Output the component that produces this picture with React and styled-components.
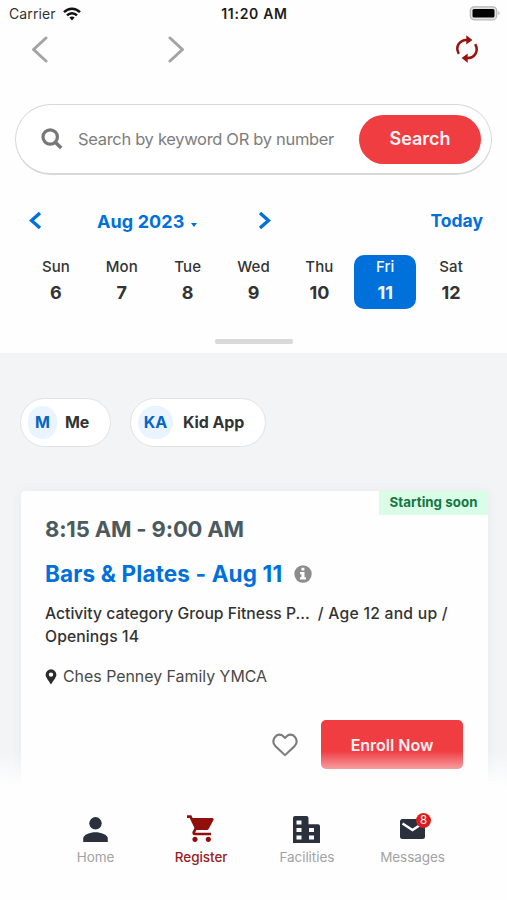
import React from 'react';
import styled, { createGlobalStyle, css } from 'styled-components';

const Global = createGlobalStyle`
  *, *::before, *::after { box-sizing: border-box; }
  body { margin: 0; background: #fff; font-family: Inter, Roboto, sans-serif; color: #333; }
  button { font-family: inherit; border: 0; padding: 0; margin: 0; background: none; }
  svg { display: block; flex: none; }
`;

const Screen = styled.div`
  width: 507px;
  height: 900px;
  overflow: hidden;
  display: flex;
  flex-direction: column;
  background: #fefefe;
`;

const Label = styled.span`
  font-size: ${p => p.$size}px;
  font-weight: ${p => p.$weight || 400};
  letter-spacing: ${p => p.$track || 0}px;
  color: ${p => p.$color || 'inherit'};
  line-height: ${p => p.$line || 24}px;
  white-space: nowrap;
`;

const StatusBar = styled.header`
  height: 28px;
  display: grid;
  grid-template-columns: 1fr auto 1fr;
  align-items: center;
  padding: 0 7px 0 9px;
`;
const Carrier = styled.div`
  display: flex;
  align-items: center;
  gap: 7px;
`;
const BatterySlot = styled.div`
  display: flex;
  justify-content: flex-end;
  margin: -2px 0 0;
`;

const BrowserBar = styled.nav`
  height: 42px;
  display: flex;
  align-items: center;
  padding: 0 28px 0 31px;
`;
const IconButton = styled.button`
  display: flex;
  margin-left: ${p => p.$left || '0'};
`;

const SearchBox = styled.div`
  height: 71px;
  margin: 34px 15px 0;
  border: 1.5px solid #d8d8d8;
  border-bottom-width: 2px;
  border-radius: 36px;
  display: flex;
  align-items: center;
  padding: 0 10px 0 25px;
  background: #fff;
`;
const Placeholder = styled(Label)`
  flex: 1;
  margin-left: 15px;
`;
const SearchButton = styled.button`
  width: 122px;
  height: 49px;
  border-radius: 25px;
  background: #ef3d42;
  color: #fff5f5;
  display: flex;
  align-items: center;
  justify-content: center;
`;

const MonthRow = styled.div`
  height: 30px;
  margin-top: 30px;
  padding: 0 24px 0 29px;
  display: flex;
  align-items: center;
  color: #0070db;
`;
const Month = styled.div`
  display: flex;
  align-items: center;
  gap: 6px;
  margin: 3px 61px 0 55px;
`;
const Caret = styled.i`
  border: 3.500px solid transparent;
  border-top: 4px solid currentColor;
  border-bottom: 0;
  margin-top: 6px;
`;
const Today = styled(Label)`
  margin: 2px 0 0 auto;
`;

const Week = styled.div`
  display: grid;
  grid-template-columns: repeat(7, 65.85px);
  justify-content: center;
  margin: 20px 0 0 0;
`;
const Day = styled.div`
  width: 62px;
  height: 54px;
  justify-self: center;
  border-radius: 10px;
  display: flex;
  flex-direction: column;
  align-items: center;
  color: #333;
  ${p => p.$selected && css`
    background: #0070db;
    color: #eef6ff;
  `}
`;

const Handle = styled.div`
  width: 78px;
  height: 5px;
  border-radius: 2px;
  background: #d9d9d9;
  margin: 30px auto 9px;
`;

const Feed = styled.main`
  position: relative;
  flex: none;
  height: 437px;
  background: #f2f4f6;
  padding: 45px 19px 0 20px;
  overflow: hidden;
`;
const Chips = styled.div`
  display: flex;
  gap: 19px;
`;
const Chip = styled.div`
  height: 49px;
  width: ${p => p.$width}px;
  border: 1.5px solid #e1e2e4;
  border-radius: 25px;
  background: #fff;
  display: flex;
  align-items: center;
  padding: 0 0 1px 7px;
`;
const Avatar = styled.div`
  width: ${p => p.$width}px;
  height: 33px;
  border-radius: 17px;
  background: #e9f4ff;
  display: flex;
  align-items: center;
  justify-content: center;
  margin-right: ${p => p.$gap}px;
`;

const Card = styled.article`
  position: relative;
  height: 340px;
  margin: 44px 0 0 1px;
  padding: 24px 25px 0 24px;
  background: #fefefe;
  border-radius: 4px 4px 0 0;
  box-shadow: 0 0 12px rgba(60, 70, 80, 0.05);
  display: flex;
  flex-direction: column;
`;
const Badge = styled.div`
  position: absolute;
  top: 0;
  right: 0;
  width: 109px;
  height: 24px;
  background: #d9fde6;
  display: flex;
  align-items: center;
  justify-content: center;
  padding-bottom: 2px;
`;
const TitleRow = styled.div`
  height: 30px;
  margin-top: 16px;
  display: flex;
  align-items: center;
  gap: 12px;
`;
const Details = styled.div`
  margin-top: 13px;
  display: flex;
  flex-wrap: wrap;
  column-gap: 8px;
`;
const Place = styled.div`
  margin-top: 17px;
  display: flex;
  align-items: center;
  gap: 6px;
`;
const Actions = styled.div`
  margin-top: 31px;
  display: flex;
  align-items: center;
  justify-content: flex-end;
  gap: 23px;
`;
const EnrollButton = styled.button`
  width: 142px;
  height: 49px;
  border-radius: 5px;
  background: #ef3d42;
  color: #fff1f1;
  display: flex;
  align-items: center;
  justify-content: center;
`;
const Fade = styled.div`
  position: absolute;
  left: 0;
  right: 0;
  bottom: 0;
  height: 39px;
  background: linear-gradient(rgba(254, 254, 254, 0), #fefefe 92%);
`;

const TabBar = styled.footer`
  flex: 1;
  display: grid;
  grid-template-columns: repeat(4, 105.7px);
  justify-content: center;
  padding: 23px 0 0 1px;
`;
const Tab = styled.div`
  display: flex;
  flex-direction: column;
  align-items: center;
  color: #2a313d;
`;
const TabIcon = styled.div`
  position: relative;
  height: 32px;
  display: flex;
  align-items: center;
`;
const Count = styled.div`
  position: absolute;
  top: 0;
  right: -6px;
  width: 15px;
  height: 15px;
  border-radius: 50%;
  background: #dc1f1c;
  display: flex;
  align-items: center;
  justify-content: center;
`;

const Wifi = () => (
  <svg width="18" height="14" viewBox="0 0 18 14" fill="none" stroke="#111" strokeWidth="2.5">
    <path d="M1 5.2C5.6.6 12.4.6 17 5.2" />
    <path d="M4 8.4c2.9-2.9 7.1-2.9 10 0" />
    <path d="M6.4 10.6c1.500-1.400 3.700-1.400 5.200 0L9 13.500z" fill="#111" stroke="none" />
  </svg>
);
const Battery = () => (
  <svg width="31" height="15" viewBox="0 0 31 15">
    <rect x="1.300" y="0.800" width="26.400" height="13" rx="3.800" fill="#e2e2e2" stroke="#b5b5b5" strokeWidth="1.200" />
    <rect x="3.500" y="3" width="22" height="8.600" rx="1.500" fill="#000" />
    <path d="M29.300 5v4.400c1.600-.5 1.600-3.900 0-4.400z" fill="#b0b0b0" />
  </svg>
);
const Chevron = ({ w, h, stroke, flip, round }) => (
  <svg width={w} height={h} viewBox={`0 0 ${w} ${h}`} fill="none" stroke="currentColor" strokeWidth={stroke} strokeLinecap={round ? 'round' : 'butt'} strokeLinejoin={round ? 'round' : 'miter'}>
    <path d={flip ? `M2 2L${w - 2.5} ${h / 2}L2 ${h - 2}` : `M${w - 2} 2L2.5 ${h / 2}L${w - 2} ${h - 2}`} />
  </svg>
);
const GrayChevron = styled.span`
  color: #a3a3a3;
`;
const Refresh = () => (
  <svg width="24" height="28" viewBox="0 0 24 28" fill="none" stroke="#98130d" strokeWidth="2.5">
    <path d="M3.800 18.800C-.2 11.500 4.600 4.600 12.200 4.900" />
    <path d="M11.300.2L17.400 5l-6.100 4.400z" fill="#98130d" stroke="none" />
    <path d="M20.200 9.200c4 7.300-.8 14.200-8.400 13.900" />
    <path d="M12.700 27.800L6.600 23l6.100-4.400z" fill="#98130d" stroke="none" />
  </svg>
);
const Magnifier = () => (
  <svg width="22" height="22" viewBox="0 0 22 22" fill="none" stroke="#777" strokeWidth="3.2">
    <circle cx="9.2" cy="9" r="7.2" />
    <path d="M14 14l6.200 6" strokeWidth="3.600" />
  </svg>
);
const Info = () => (
  <svg width="18" height="18" viewBox="0 0 18 18">
    <circle cx="9" cy="9" r="8.700" fill="#8c8c8c" />
    <path d="M7.400 2.800h3v2.600h-3zM6 7h4.500v5.200H12v2.200H6v-2.200h1.400V9.200H6z" fill="#fff" />
  </svg>
);
const Pin = () => (
  <svg width="12" height="16" viewBox="0 0 12 16">
    <path fillRule="evenodd" d="M6 .3A5.400 5.400 0 0 0 .6 5.700C.6 8.300 3.800 11.500 6 15.600c2.200-4.100 5.400-7.300 5.400-9.900A5.400 5.400 0 0 0 6 .3zm0 7.500a2.200 2.200 0 1 1 0-4.400 2.200 2.200 0 0 1 0 4.400z" fill="#2b2b2b" />
  </svg>
);
const Heart = () => (
  <svg width="26" height="24" viewBox="0 0 26 24" fill="none" stroke="#7b7b7b" strokeWidth="2.100" strokeLinejoin="round">
    <path d="M13 22.300L3.300 12.900C-1.500 7.500 4.200-.9 10.700 2.700L13 4.900l2.300-2.200C21.800-.9 27.500 7.500 22.700 12.900z" />
  </svg>
);
const Person = () => (
  <svg width="25" height="25" viewBox="0 0 25 25" fill="currentColor">
    <circle cx="12.500" cy="6.300" r="6.200" />
    <path d="M.2 25v-3.500c0-3.800 7-6.200 12.300-6.200s12.300 2.400 12.300 6.200V25z" />
  </svg>
);
const Cart = () => (
  <svg width="28" height="28" viewBox="1 2 21 20.500" fill="#900f0a">
    <path d="M7 18c-1.100 0-1.990.9-1.990 2S5.900 22 7 22s2-.9 2-2-.9-2-2-2zM1 2v2h2l3.600 7.590-1.350 2.450c-.16.28-.25.61-.25.960 0 1.100.9 2 2 2h12v-2H7.420c-.14 0-.25-.11-.25-.25l.03-.12.9-1.630h7.450c.75 0 1.410-.41 1.750-1.030l3.580-6.490A1 1 0 0 0 20 4H5.210l-.94-2H1zm16 16c-1.100 0-1.990.9-1.990 2s.89 2 1.990 2 2-.9 2-2-.9-2-2-2z" />
  </svg>
);
const Building = () => (
  <svg width="27" height="27" viewBox="0 0 27 27">
    <path fill="currentColor" fillRule="evenodd" d="M2 0h11.500q2 0 2 2v6.200H25q2 0 2 2V27H0V2q0-2 2-2zM3.500 4.500v4h5v-4zM3.500 12v4h5v-4zM3.500 19.500v4h5v-4zM16 12v4h5v-4zM16 19.500v4h5v-4z" />
  </svg>
);
const Envelope = () => (
  <svg width="25" height="20" viewBox="0 0 25 20">
    <rect width="25" height="20" rx="2.500" fill="currentColor" />
    <path d="M2.500 4.500l10 6.500 10-6.500" fill="none" stroke="#fff" strokeWidth="2.400" />
  </svg>
);

const days = [['Sun', 6], ['Mon', 7], ['Tue', 8], ['Wed', 9], ['Thu', 10], ['Fri', 11], ['Sat', 12]];
const tabs = [
  { name: 'Home', icon: <Person /> },
  { name: 'Register', icon: <Cart />, active: true },
  { name: 'Facilities', icon: <Building /> },
  { name: 'Messages', icon: <Envelope />, count: 8 },
];

export default function App() {
  return (
    <Screen>
      <Global />
      <StatusBar>
        <Carrier>
          <Label $size={14} $track={0.1} $color="#333">Carrier</Label>
          <Wifi />
        </Carrier>
        <Label $size={14} $weight={600} $track={0.7} $color="#1c1c1c">11:20 AM</Label>
        <BatterySlot><Battery /></BatterySlot>
      </StatusBar>
      <BrowserBar>
        <IconButton aria-label="Back"><GrayChevron><Chevron w={17} h={27} stroke={3} round /></GrayChevron></IconButton>
        <IconButton aria-label="Forward" $left="120px"><GrayChevron><Chevron w={17} h={27} stroke={3} round flip /></GrayChevron></IconButton>
        <IconButton aria-label="Refresh" $left="auto"><Refresh /></IconButton>
      </BrowserBar>

      <SearchBox>
        <Magnifier />
        <Placeholder $size={16.5} $track={-0.32} $color="#7d7d7d">Search by keyword OR by number</Placeholder>
        <SearchButton><Label $size={18} $weight={600}>Search</Label></SearchButton>
      </SearchBox>

      <MonthRow>
        <Chevron w={13} h={19} stroke={3.4} />
        <Month>
          <Label $size={18} $weight={700} $track={0.1}>Aug 2023</Label>
          <Caret />
        </Month>
        <Chevron w={13} h={19} stroke={3.4} flip />
        <Today $size={17.5} $weight={700}>Today</Today>
      </MonthRow>
      <Week>
        {days.map(([name, date]) => (
          <Day key={name} $selected={date === 11}>
            <Label $size={15} $weight={550} $track={0.1}>{name}</Label>
            <Label $size={18} $weight={700} $line={28}>{date}</Label>
          </Day>
        ))}
      </Week>
      <Handle />

      <Feed>
        <Chips>
          <Chip $width={91}>
            <Avatar $width={29} $gap={8}><Label $size={16} $weight={700} $color="#0765c4">M</Label></Avatar>
            <Label $size={16} $weight={700} $track={-0.2}>Me</Label>
          </Chip>
          <Chip $width={136}>
            <Avatar $width={35} $gap={10}><Label $size={16} $weight={700} $color="#0765c4">KA</Label></Avatar>
            <Label $size={16} $weight={700} $track={-0.1}>Kid App</Label>
          </Chip>
        </Chips>
        <Card>
          <Badge><Label $size={13.3} $weight={700} $track={0.05} $color="#157545">Starting soon</Label></Badge>
          <Label $size={22} $weight={700} $track={-0.15} $line={28} $color="#4c5a60">8:15 AM - 9:00 AM</Label>
          <TitleRow>
            <Label $size={22.5} $weight={700} $track={0.14} $color="#0070db">Bars &amp; Plates - Aug 11</Label>
            <Info />
          </TitleRow>
          <Details>
            <Label $size={15.7} $weight={500} $line={23}>Activity category Group Fitness P...</Label>
            <Label $size={15.7} $weight={500} $line={23} $track={0.25}>/ Age 12 and up /</Label>
            <Label $size={15.7} $weight={500} $line={23} $track={0.1}>Openings 14</Label>
          </Details>
          <Place>
            <Pin />
            <Label $size={15.9} $color="#4a4a4a">Ches Penney Family YMCA</Label>
          </Place>
          <Actions>
            <Heart />
            <EnrollButton><Label $size={16} $weight={600}>Enroll Now</Label></EnrollButton>
          </Actions>
        </Card>
        <Fade />
      </Feed>

      <TabBar>
        {tabs.map(tab => (
          <Tab key={tab.name}>
            <TabIcon>
              {tab.icon}
              {tab.count && <Count><Label $size={11.5} $line={15} $color="#fff">{tab.count}</Label></Count>}
            </TabIcon>
            <Label $size={13.5} $line={24} $track={-0.05} $weight={tab.active ? 500 : 400} $color={tab.active ? '#9b201d' : '#a3a3a3'}>{tab.name}</Label>
          </Tab>
        ))}
      </TabBar>
    </Screen>
  );
}
